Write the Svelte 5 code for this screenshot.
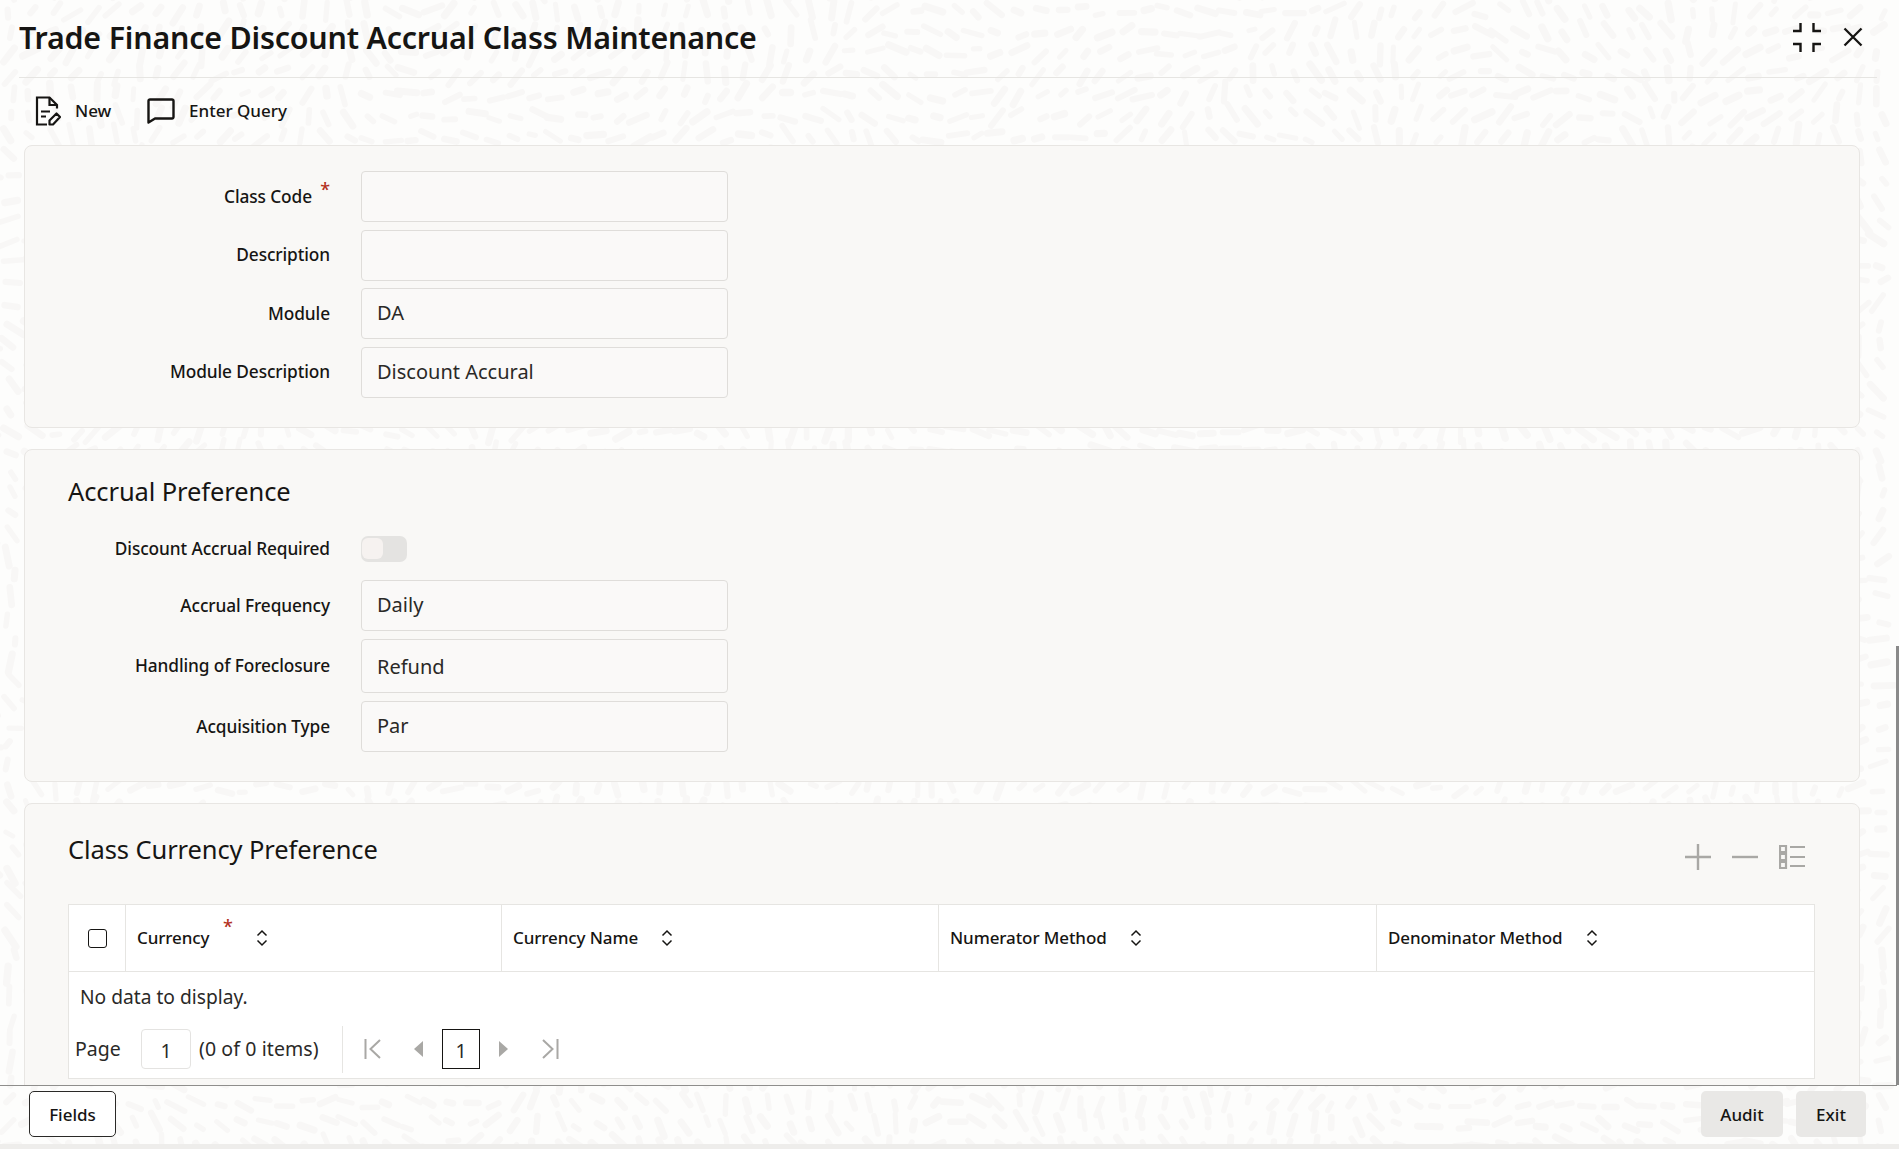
<script>
  function rng(seed) {
    let s = seed;
    return () => {
      s = (s * 1664525 + 1013904223) % 4294967296;
      return s / 4294967296;
    };
  }
  const r = rng(20240);
  const dashes = [];
  for (let y = -10; y < 1170; y += 21) {
    for (let x = -10; x < 1892; x += 21) {
      const a =
        1.2 * Math.sin(x / 130 + y / 210) +
        1.3 * Math.cos(y / 95 - x / 260) +
        0.6 * Math.sin((x + y) / 47) +
        (r() - 0.5) * 0.7;
      const len = 3 + r() * 7;
      const cx = x + (r() - 0.5) * 9;
      const cy = y + (r() - 0.5) * 9;
      dashes.push({
        x1: +(cx - Math.cos(a) * len).toFixed(1),
        y1: +(cy - Math.sin(a) * len).toFixed(1),
        x2: +(cx + Math.cos(a) * len).toFixed(1),
        y2: +(cy + Math.sin(a) * len).toFixed(1),
        w: +(5 + r() * 2.5).toFixed(1)
      });
    }
  }

  const general = [
    { label: 'Class Code', value: '', required: true },
    { label: 'Description', value: '' },
    { label: 'Module', value: 'DA' },
    { label: 'Module Description', value: 'Discount Accural' }
  ];
  const accrual = [
    { label: 'Accrual Frequency', value: 'Daily' },
    { label: 'Handling of Foreclosure', value: 'Refund', tall: true },
    { label: 'Acquisition Type', value: 'Par' }
  ];
  const columns = [
    { label: 'Currency', required: true, w: 376, sort: 120 },
    { label: 'Currency Name', w: 437, sort: 149 },
    { label: 'Numerator Method', w: 438, sort: 181 },
    { label: 'Denominator Method', w: 437, sort: 199 }
  ];
</script>

<div class="shell">
  <svg class="texture" width="1899" height="1149" aria-hidden="true">
    <g stroke="#f8f7f6" stroke-linecap="round">
      {#each dashes as d}
        <line x1={d.x1} y1={d.y1} x2={d.x2} y2={d.y2} stroke-width={d.w} />
      {/each}
    </g>
  </svg>

  <main class="main">
    <header class="title-row">
      <h1>Trade Finance Discount Accrual Class Maintenance</h1>
      <div class="window-actions">
        <svg width="28" height="29" viewBox="0 0 28 29" fill="none" stroke="#161513" stroke-width="2.4">
          <path d="M7.500 0v8H0M20.500 0v8H28M7.500 29v-8H0M20.500 29v-8H28" />
        </svg>
        <svg class="close" width="20" height="20" viewBox="0 0 20 20" fill="none" stroke="#161513" stroke-width="2.3">
          <path d="M1.500 1.500l17 17M18.500 1.500l-17 17" />
        </svg>
      </div>
    </header>

    <div class="toolbar">
      <button class="tool new">
        <svg width="26" height="30" viewBox="0 0 26 30" fill="none" stroke="#161513" stroke-width="2.2">
          <path d="M12 28.500H2V1.500h12.500L22 9v3.500" />
          <path d="M14.500 1.500V9H22" />
          <path d="M6 15.500h9M6 20.500h5" />
          <path d="M14.500 28.500v-4l7-7 3.500 3.500-7 7.500z" stroke-linejoin="round" />
        </svg>
        <span>New</span>
      </button>
      <button class="tool query">
        <svg width="28" height="26" viewBox="0 0 28 26" fill="none" stroke="#161513" stroke-width="2.4">
          <path d="M3 1.500h22a1.500 1.500 0 0 1 1.500 1.500v16a1.500 1.500 0 0 1-1.500 1.500H8l-6.500 4V3A1.500 1.500 0 0 1 3 1.500z" stroke-linejoin="round" />
        </svg>
        <span>Enter Query</span>
      </button>
    </div>

    <section class="card card-general">
      {#each general as f}
        <div class="row">
          <label>
            {f.label}
            {#if f.required}<i class="req">*</i>{/if}
          </label>
          <div class="field">{f.value}</div>
        </div>
      {/each}
    </section>

    <section class="card card-accrual">
      <h2>Accrual Preference</h2>
      <div class="row toggle-row">
        <label>Discount Accrual Required</label>
        <span class="toggle"><span class="knob"></span></span>
      </div>
      {#each accrual as f}
        <div class="row" class:tall-row={f.tall}>
          <label>{f.label}</label>
          <div class="field" class:tall={f.tall}>{f.value}</div>
        </div>
      {/each}
    </section>

    <section class="card card-currency">
      <div class="section-head">
        <h2>Class Currency Preference</h2>
        <div class="grid-actions">
          <svg width="26" height="26" viewBox="0 0 26 26" stroke="#a9a8a5" stroke-width="2.4" fill="none"><path d="M0 13h26M13 0v26" /></svg>
          <svg width="26" height="26" viewBox="0 0 26 26" stroke="#a9a8a5" stroke-width="2.4" fill="none"><path d="M0 13h26" /></svg>
          <svg width="26" height="26" viewBox="0 0 26 26" stroke="#a9a8a5" stroke-width="2.2" fill="none">
            <path d="M1 2h6v6H1zM1 10h6v6H1zM1 18h6v6H1zM11 3h15M11 13h15M11 22h15" />
          </svg>
        </div>
      </div>

      <div class="table">
        <div class="thead">
          <div class="th check"><span class="checkbox"></span></div>
          {#each columns as c}
            <div class="th" style="width:{c.w}px">
              <span class="th-label">{c.label}</span>
              {#if c.required}<i class="req th-req">*</i>{/if}
              <svg class="sort" style="left:{c.sort}px" width="12" height="18" viewBox="0 0 12 18" fill="none" stroke="#161513" stroke-width="1.500">
                <path d="M1.500 6.500L6 2l4.500 4.500M1.500 11.500L6 16l4.500-4.500" />
              </svg>
            </div>
          {/each}
        </div>
        <div class="empty">No data to display.</div>
        <div class="pager">
          <span class="page-label">Page</span>
          <span class="page-input">1</span>
          <span class="count">(0 of 0 items)</span>
          <span class="divider"></span>
          <svg class="p-first" width="18" height="22" viewBox="0 0 18 22" fill="none" stroke="#a9a8a5" stroke-width="2"><path d="M1.500 1v20M16 2L6.500 11 16 20" /></svg>
          <svg class="p-prev" width="10" height="16" viewBox="0 0 10 16" fill="#a9a8a5"><path d="M10 0v16L1 8z" /></svg>
          <span class="page-current">1</span>
          <svg class="p-next" width="10" height="16" viewBox="0 0 10 16" fill="#a9a8a5"><path d="M0 0v16l9-8z" /></svg>
          <svg class="p-last" width="18" height="22" viewBox="0 0 18 22" fill="none" stroke="#a9a8a5" stroke-width="2"><path d="M16.500 1v20M2 2l9.500 9L2 20" /></svg>
        </div>
      </div>
    </section>
  </main>

  <footer class="footer">
    <button class="fields">Fields</button>
    <div class="footer-right">
      <button class="grey audit">Audit</button>
      <button class="grey exit">Exit</button>
    </div>
  </footer>
  <div class="band"></div>
  <span class="scrollthumb"></span>
</div>

<style>
  :global(body) {
    margin: 0;
    background: #fff;
  }
  .shell {
    position: relative;
    width: 1899px;
    height: 1149px;
    overflow: hidden;
    display: flex;
    flex-direction: column;
    background: #fdfdfc;
    font-family: "Noto Sans", "Open Sans", sans-serif;
    color: #161513;
  }
  .texture {
    position: absolute;
    inset: 0;
  }
  .main {
    position: relative;
    flex: 1;
    min-height: 0;
    overflow: hidden;
    padding: 0 40px 0 24px;
    box-sizing: border-box;
  }
  .title-row {
    display: flex;
    justify-content: space-between;
    align-items: center;
    margin: 0 -18px 0 -5px;
    border-bottom: 1px solid #e6e5e2;
    padding-bottom: 3px;
    height: 74px;
  }
  h1 {
    margin: 1px 0 0;
    font-size: 30.400px;
    font-weight: 600;
    letter-spacing: -0.2px;
    line-height: 40px;
  }
  .window-actions {
    display: flex;
    align-items: center;
    gap: 22px;
    padding-right: 14px;
  }
  .toolbar {
    display: flex;
    align-items: center;
    height: 65px;
    padding-bottom: 2px;
    padding-left: 11px;
  }
  .tool {
    display: flex;
    align-items: center;
    background: none;
    border: 0;
    padding: 0;
    font: inherit;
    font-size: 17px;
    font-weight: 500;
    color: #161513;
  }
  .tool.new {
    gap: 14px;
    width: 112px;
  }
  .tool.query {
    gap: 14px;
  }
  .card {
    background: #f9f8f6;
    border: 1px solid #e8e6e3;
    border-radius: 8px;
    box-sizing: border-box;
    margin-bottom: 21px;
    width: 1836px;
  }
  .card-general {
    height: 283px;
    padding-top: 25px;
  }
  .card-accrual {
    height: 333px;
    padding-top: 23px;
  }
  .card-currency {
    height: 340px;
    padding-top: 24px;
  }
  h2 {
    margin: 0;
    font-size: 25.500px;
    font-weight: 400;
    line-height: 36px;
    letter-spacing: -0.1px;
  }
  .card-accrual h2 {
    padding-left: 43px;
    margin-bottom: 27px;
  }
  .row {
    display: flex;
    align-items: center;
    margin-bottom: 7.670px;
  }
  .row.tall-row {
    margin-bottom: 8.670px;
  }
  .toggle-row {
    height: 26px;
    margin-bottom: 18px;
  }
  label {
    position: relative;
    width: 305px;
    text-align: right;
    font-size: 17.300px;
    font-weight: 500;
    letter-spacing: -0.1px;
    line-height: 24px;
    margin-right: 31px;
    box-sizing: border-box;
  }
  .req {
    color: #b3311f;
    font-style: normal;
    font-size: 18px;
    line-height: 1;
    position: absolute;
    right: 0;
    top: -5px;
  }
  .row:first-child label {
    padding-right: 18px;
  }
  .field {
    width: 367px;
    height: 51px;
    box-sizing: border-box;
    border: 1px solid #dfddda;
    border-radius: 4px;
    background: #faf9f8;
    padding: 0 15px;
    font-size: 20px;
    line-height: 48px;
    font-weight: 400;
    color: #2a2927;
  }
  .field.tall {
    height: 54px;
    line-height: 54px;
  }
  .toggle {
    display: block;
    width: 46px;
    height: 26px;
    border-radius: 7px;
    background: #e4e3e1;
    position: relative;
  }
  .knob {
    position: absolute;
    left: 1px;
    top: 2px;
    width: 21px;
    height: 21px;
    border-radius: 6px;
    background: #f6f2f0;
  }
  .section-head {
    display: flex;
    justify-content: space-between;
    padding: 3px 54px 0 43px;
    height: 76px;
    box-sizing: border-box;
  }
  .grid-actions {
    display: flex;
    gap: 21px;
    margin-top: 13px;
  }
  .table {
    margin-left: 43px;
    width: 1747px;
    height: 175px;
    background: #fff;
    border: 1px solid #e6e5e2;
    box-sizing: border-box;
  }
  .thead {
    display: flex;
    height: 67px;
    border-bottom: 1px solid #e6e5e2;
    box-sizing: border-box;
  }
  .th {
    position: relative;
    display: flex;
    align-items: center;
    box-sizing: border-box;
    border-left: 1px solid #e6e5e2;
    padding-left: 11px;
    font-size: 17px;
    font-weight: 500;
    letter-spacing: -0.1px;
  }
  .th-label {
    margin-top: -1px;
  }
  .th.check {
    width: 56px;
    border-left: 0;
    padding-left: 19px;
  }
  .checkbox {
    display: block;
    width: 19px;
    height: 19px;
    border: 1.500px solid #161513;
    border-radius: 3px;
    box-sizing: border-box;
  }
  .sort {
    position: absolute;
    top: 24px;
    margin-left: 10px;
  }
  .th-req {
    left: 97px;
    right: auto;
    top: 12px;
  }
  .empty {
    padding: 0 0 0 11px;
    font-size: 19.200px;
    line-height: 50px;
    height: 50px;
    color: #2a2927;
  }
  .pager {
    display: flex;
    align-items: center;
    height: 54px;
    font-size: 19.500px;
    color: #2a2927;
  }
  .page-label {
    margin-left: 6px;
    margin-top: -2px;
    width: 66px;
  }
  .page-input {
    width: 50px;
    height: 40px;
    box-sizing: border-box;
    border: 1px solid #e4e3e1;
    border-radius: 4px;
    text-align: center;
    line-height: 40px;
    margin-right: 8px;
    padding-top: 1px;
  }
  .count {
    width: 143px;
    margin-top: -2px;
    letter-spacing: 0.1px;
  }
  .divider {
    width: 1px;
    height: 47px;
    background: #e6e5e2;
    margin-right: 21px;
  }
  .p-prev {
    margin-left: 31px;
    margin-right: 19px;
  }
  .page-current {
    width: 38px;
    height: 40px;
    box-sizing: border-box;
    border: 1.500px solid #161513;
    text-align: center;
    line-height: 40px;
    padding-top: 1px;
    margin-right: 19px;
  }
  .p-last {
    margin-left: 32px;
  }
  .footer {
    position: relative;
    height: 59px;
    box-sizing: border-box;
    border-top: 1.500px solid #8f8e8c;
    display: flex;
    justify-content: space-between;
    align-items: flex-start;
    padding: 5px 31px 0 29px;
    margin-right: 2px;
  }
  button {
    font-family: inherit;
  }
  .fields {
    width: 87px;
    height: 46px;
    background: #fff;
    border: 1px solid #2a2927;
    border-radius: 5px;
    font-size: 17px;
    font-weight: 500;
    color: #161513;
    padding: 0;
  }
  .footer-right {
    display: flex;
    gap: 13px;
  }
  .grey {
    height: 46px;
    background: #e9e8e6;
    border: 0;
    border-radius: 5px;
    font-size: 17px;
    font-weight: 500;
    color: #161513;
    padding: 0;
  }
  .audit {
    width: 82px;
  }
  .exit {
    width: 70px;
  }
  .band {
    position: relative;
    height: 5px;
    background: #eeedeb;
  }
  .scrollthumb {
    position: absolute;
    right: 0;
    top: 646px;
    width: 3px;
    height: 439px;
    background: #8a8a8a;
  }
</style>
